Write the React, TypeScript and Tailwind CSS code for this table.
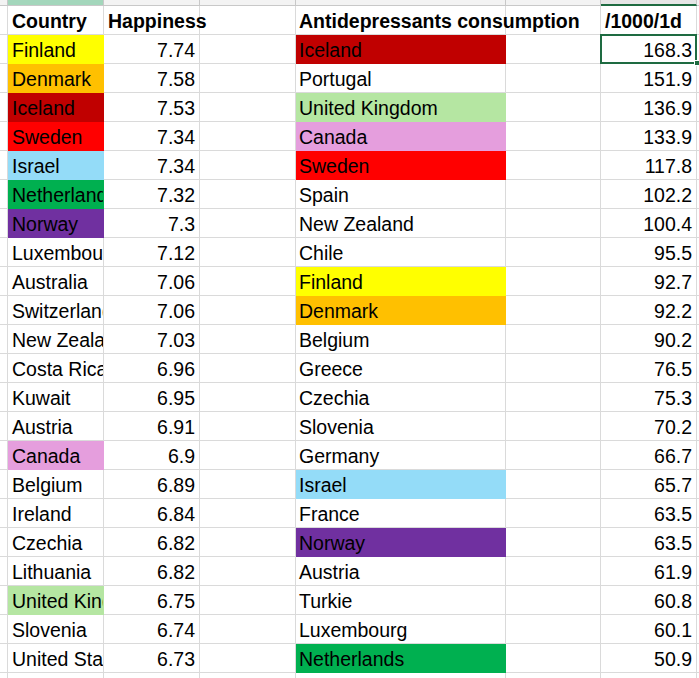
import React from "react";

type Fill = "y" | "o" | "dr" | "r" | "lb" | "g" | "p" | "pk" | "lg" | "";

const FILL: Record<string, string> = {
  y: "bg-[#ffff00] border-[#ffff00]",
  o: "bg-[#ffc000] border-[#ffc000]",
  dr: "bg-[#c00000] border-[#c00000]",
  r: "bg-[#ff0000] border-[#ff0000]",
  lb: "bg-[#94dcf8] border-[#94dcf8]",
  g: "bg-[#00b050] border-[#00b050]",
  p: "bg-[#7030a0] border-[#7030a0]",
  pk: "bg-[#e59edd] border-[#e59edd]",
  lg: "bg-[#b5e6a2] border-[#b5e6a2]",
  "": "bg-white border-[#dadada]",
};

const left: [string, string, Fill][] = [
  ["Finland", "7.74", "y"],
  ["Denmark", "7.58", "o"],
  ["Iceland", "7.53", "dr"],
  ["Sweden", "7.34", "r"],
  ["Israel", "7.34", "lb"],
  ["Netherlands", "7.32", "g"],
  ["Norway", "7.3", "p"],
  ["Luxembourg", "7.12", ""],
  ["Australia", "7.06", ""],
  ["Switzerland", "7.06", ""],
  ["New Zealand", "7.03", ""],
  ["Costa Rica", "6.96", ""],
  ["Kuwait", "6.95", ""],
  ["Austria", "6.91", ""],
  ["Canada", "6.9", "pk"],
  ["Belgium", "6.89", ""],
  ["Ireland", "6.84", ""],
  ["Czechia", "6.82", ""],
  ["Lithuania", "6.82", ""],
  ["United Kingdom", "6.75", "lg"],
  ["Slovenia", "6.74", ""],
  ["United States", "6.73", ""],
];

const right: [string, string, Fill][] = [
  ["Iceland", "168.3", "dr"],
  ["Portugal", "151.9", ""],
  ["United Kingdom", "136.9", "lg"],
  ["Canada", "133.9", "pk"],
  ["Sweden", "117.8", "r"],
  ["Spain", "102.2", ""],
  ["New Zealand", "100.4", ""],
  ["Chile", "95.5", ""],
  ["Finland", "92.7", "y"],
  ["Denmark", "92.2", "o"],
  ["Belgium", "90.2", ""],
  ["Greece", "76.5", ""],
  ["Czechia", "75.3", ""],
  ["Slovenia", "70.2", ""],
  ["Germany", "66.7", ""],
  ["Israel", "65.7", "lb"],
  ["France", "63.5", ""],
  ["Norway", "63.5", "p"],
  ["Austria", "61.9", ""],
  ["Turkie", "60.8", ""],
  ["Luxembourg", "60.1", ""],
  ["Netherlands", "50.9", "g"],
];

const GRID =
  "grid grid-cols-[8px_96px_96px_96px_210px_95px_96px_1fr]";
const BASE =
  "h-[29px] border-r border-b whitespace-nowrap leading-[21px] pt-[5px]";

function Cell({
  children,
  fill = "",
  align = "left",
  clip = true,
  bold = false,
  pad = "pl-[4px]",
}: {
  children?: React.ReactNode;
  fill?: Fill;
  align?: "left" | "right";
  clip?: boolean;
  bold?: boolean;
  pad?: string;
}) {
  return (
    <div
      className={`${BASE} ${FILL[fill]} ${clip ? "overflow-hidden" : "overflow-visible relative z-10"} ${
        align === "right" ? "text-right pr-[4px]" : pad
      } ${bold ? "font-bold" : ""}`}
    >
      {children}
    </div>
  );
}

export default function App() {
  return (
    <div
      className="w-[699px] h-[678px] overflow-hidden bg-white text-black text-[19.5px]"
      style={{ fontFamily: '"Liberation Sans", Arial, sans-serif' }}
    >
      {/* column header strip */}
      <div className={`${GRID} h-[6px]`}>
        <div className="bg-[#f3f3f3] border-r border-b border-[#c8c8c8]" />
        <div className="bg-[#a3d6bb] border-r border-b border-[#c8c8c8]" />
        <div className="bg-[#f3f3f3] border-r border-b border-[#c8c8c8]" />
        <div className="bg-[#f3f3f3] border-r border-b border-[#c8c8c8]" />
        <div className="bg-[#f3f3f3] border-r border-b border-[#c8c8c8]" />
        <div className="bg-[#f3f3f3] border-r border-b border-[#c8c8c8]" />
        <div className="bg-[#e6e6e6] border-r border-[#c8c8c8] border-b-2 border-b-[#1e6b41]" />
        <div className="bg-[#f3f3f3] border-b border-[#c8c8c8]" />
      </div>

      {/* header row */}
      <div className={GRID}>
        <Cell />
        <Cell bold>Country</Cell>
        <Cell bold clip={false}>Happiness</Cell>
        <Cell />
        <Cell bold clip={false} pad="pl-[3px]">Antidepressants consumption</Cell>
        <Cell />
        <Cell bold>/1000/1d</Cell>
        <Cell />
      </div>

      {left.map((l, i) => {
        const r = right[i];
        return (
          <div key={i} className={GRID}>
            <Cell />
            <Cell fill={l[2]}>{l[0]}</Cell>
            <Cell align="right">{l[1]}</Cell>
            <Cell />
            <Cell fill={r[2]} pad="pl-[3px]">{r[0]}</Cell>
            <Cell />
            {i === 0 ? (
              <div className="relative">
                <Cell align="right">{r[1]}</Cell>
                <div className="absolute -left-[1px] -top-[1px] w-[97px] h-[30px] border-2 border-[#1e6b41] pointer-events-none z-20" />
                <div className="absolute left-[93px] top-[25px] w-[6px] h-[6px] bg-[#1e6b41] border border-white z-30" />
              </div>
            ) : (
              <Cell align="right">{r[1]}</Cell>
            )}
            <Cell />
          </div>
        );
      })}

      <div className={GRID}>
        <Cell />
        <Cell />
        <Cell />
        <Cell />
        <Cell />
        <Cell />
        <Cell />
        <Cell />
      </div>
    </div>
  );
}
